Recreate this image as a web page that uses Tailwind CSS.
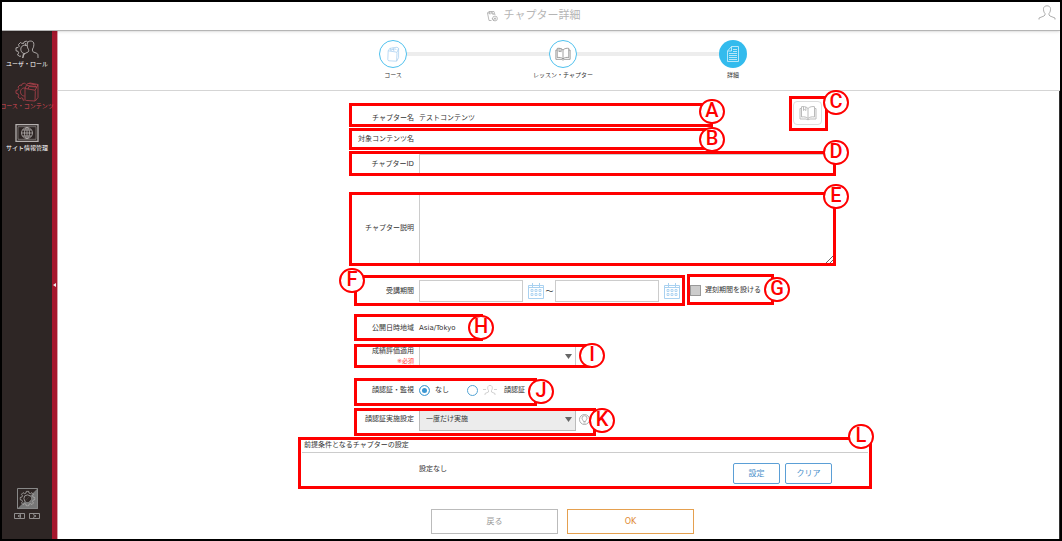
<!DOCTYPE html>
<html lang="ja">
<head>
<meta charset="utf-8">
<meta name="viewport" content="width=device-width, initial-scale=1">
<title>チャプター詳細</title>
<script src="https://cdn.jsdelivr.net/npm/@tailwindcss/browser@4"></script>
</head>
<body class="flex min-h-screen flex-col border-2 border-black bg-white font-['DejaVu_Sans','Noto_Sans_CJK_JP',sans-serif] text-[7px] leading-[9px] text-[#333]">

<svg class="hidden" aria-hidden="true">
  <symbol id="gear" viewBox="0 0 20 20" fill="none" stroke="currentColor">
    <path d="M8.6 1h2.8l.5 2.2 1.700.7 2-1.200 1.900 2-1.200 1.900.8 1.700 2.200.5v2.600l-2.200.6-.8 1.700 1.200 1.900-1.900 2-2-1.200-1.700.7-.5 2.200H8.600l-.5-2.200-1.700-.7-2 1.200-1.900-2 1.200-1.900-.8-1.700L.7 11.400V8.800l2.200-.5.8-1.700-1.200-1.900 1.900-2 2 1.200 1.700-.7z"/>
    <circle cx="10" cy="10" r="4.500"/>
  </symbol>
  <symbol id="person" viewBox="0 0 18 16" fill="none" stroke="currentColor">
    <path d="M1 14.500v-1.500l5-2 1-1V8.500C5.500 7 5.500 5 5.500 3.500 5.800 1.700 7.200.8 9 .8s3.200.9 3.500 2.700c0 1.500 0 3.500-1.500 5V10l1 1 5 2v1.500"/>
  </symbol>
  <symbol id="calendar" viewBox="0 0 16 16" fill="none" stroke="currentColor">
    <path d="M.5 2.500h15v13H.5zM.5 4.500h15M4.500 0v4M11.500 0v4"/>
    <path d="M3 6.500h2v2H3zM7 6.500h2v2H7zM11 6.500h2v2h-2zM3 10.500h2v2H3zM7 10.500h2v2H7zM11 10.500h2v2h-2z" stroke-width=".9"/>
  </symbol>
  <symbol id="book" viewBox="0 0 18 15" fill="none" stroke="currentColor">
    <path d="M9 3C7 1 4.500.8 2.500 1.200v10.300C5 11 7.500 11.500 9 13c1.500-1.500 4-2 6.500-1.500V1.200C13.500.8 11 1 9 3zM9 3v10M2.500 3H1v10.500h6l2 .8 2-.8h6V3h-1.500"/>
    <path d="M4.500 1v4l1.200-1 1.200 1V1.400"/>
  </symbol>
  <symbol id="binder" viewBox="0 0 16 20" fill="none" stroke="currentColor">
    <path d="M2 6l9.500 1.500c1 .2 1.500.5 1.500 1.500l-.5 10L3 18.500c-1-.2-1.500-.6-1.500-1.500zM2 6l2-3 9-1.500L15 3v11.500l-2.300 4.300M13 8l2-5M5 5l6-1.500 1 1.500M4.500 2.700l1.200 3.700M8 2l1.200 4.500"/>
  </symbol>
</svg>

<header class="relative flex h-[29px] items-center justify-center border-b border-[#b5b5b5] pl-1 shadow-sm">
  <svg class="mr-1.5 h-3 w-3 text-[#aaa]" viewBox="0 0 12 12" fill="none" stroke="currentColor" stroke-width=".8"><path d="M5.500 10.500H3L1.500 3l1.500-1.500h5L9 5M1.500 3H7l1 2M3 1.500l1 3M5.500 1.500l1 3"/><circle cx="9" cy="8.500" r="2.400"/><path d="M6 8l2 3M8.500 8h1.200v1.200H8.500z"/></svg>
  <h1 class="text-[11px] leading-4 text-[#b5b5b5]">チャプター詳細</h1>
  <button class="absolute right-1 top-[3px] text-[#999]" aria-label="ユーザー"><svg class="h-4 w-[18px]" stroke-width=".8"><use href="#person"/></svg></button>
</header>

<div class="flex flex-1">
  <aside class="flex w-[56px] shrink-0 border-r border-[#d9a0a8] bg-[#a5172d]">
    <nav class="flex w-[50px] flex-col items-center bg-[#2e2625] pb-5 text-[6px] leading-2 text-white">
      <a href="#" class="mt-[9px] flex flex-col items-center whitespace-nowrap">
        <svg class="h-5 w-6" viewBox="0 0 24 20" fill="none" stroke="#c9c5c4" stroke-width=".8"><path d="M13 2.500L11.500 1 9 2 8.500 3.500 6.500 3.200 5.500 2.500 3.500 4.500l.7 1.800L3 7.500l-2 .3v3l2 .5.7 1.500L2.500 15 5 16.500l1-.7M12 5.500C8 4 5 7 6 10.500c.5 2 2 3 3.500 3L7.500 18M11 3c-1 1-.5 2-.5 3"/><path d="M8 18v-3.500l5-2.500c1-.5.8-1.500.5-2.500-1.500-2-1.500-5-1-7C13.500.5 18 .5 18.700 3c.4 2 0 4.500-1.200 6 0 1.500-.2 2.500 1 3l3 1.200c1.200.5 1.500 1 1.500 2.800v2"/></svg>
        ユーザ・ロール
      </a>
      <a href="#" class="mt-3.5 flex flex-col items-center whitespace-nowrap text-[#dc4a58]">
        <svg class="h-5 w-6" viewBox="0 0 24 20" fill="none" stroke="#b3414c" stroke-width=".8"><path d="M11 2.500L9.500 1 7 2 6.500 3.500 5 3 3 5l.8 1.500L3 8 1 8.300v3l2 .5.7 1.500L3 15l2 1.700 1.500-.9 1.500.7v1.700h1.500M10 6C6.500 5.500 4.500 9 6 12c.8 1.400 2 2 3.500 2"/><path d="M10 6.500L19 8c1 .2 1.300.5 1.300 1.500L20 19l-8.500-.5c-1-.1-1.500-.5-1.500-1.500zM10 6.500L12 2l3-1 8 1.500v13L20.300 19M20 8.500l3-6M13 7l1-2.500 8 .5M12 3.500l9 1M14 1.500l7 1.500"/></svg>
        コース・コンテンツ
      </a>
      <a href="#" class="mt-3.5 flex flex-col items-center whitespace-nowrap">
        <svg class="h-5 w-6" viewBox="0 0 24 20" fill="none" stroke="#b5b0af" stroke-width=".8"><path d="M1 .7h22v16.600H1z" stroke-width="1.300"/><path d="M3 2.700h18v12.600H3z" stroke-width=".5"/><circle cx="12" cy="9" r="5.500"/><ellipse cx="12" cy="9" rx="2.500" ry="5.500"/><path d="M6.500 9h11M7.500 6h9M7.500 12h9M12 3.500v11"/></svg>
        サイト情報管理
      </a>
      <button class="mt-auto h-[21px] w-[21px]" aria-label="設定メニュー"><svg class="h-full w-full" viewBox="0 0 21 21"><path d="M21 0v21H0z" fill="#777"/><path d="M.5.500h20v20H.5z" fill="none" stroke="#888"/><g class="text-[#b0adac]"><use href="#gear" x="2.500" y="2.500" width="16" height="16"/></g><path d="M8 13L13 8a3.500 3.500 0 0 1-5 5z" fill="#2e2625"/></svg></button>
      <div class="mt-1 flex gap-1">
        <button aria-label="前へ"><svg class="h-1.5 w-[11px]" viewBox="0 0 11 6" fill="none" stroke="#aaa" stroke-width=".8"><path d="M.5.500h10v5H.5zM6.500 1.500L4 3l2.500 1.500z"/></svg></button>
        <button aria-label="次へ"><svg class="h-1.5 w-[11px]" viewBox="0 0 11 6" fill="none" stroke="#aaa" stroke-width=".8"><path d="M.5.500h10v5H.5zM4 1.500L7 3 4 4.500"/></svg></button>
      </div>
    </nav>
    <button class="flex flex-1 items-center justify-center" aria-label="メニューを閉じる"><svg class="h-1 w-[3px]" viewBox="0 0 3 4"><path d="M3 0v4L0 2z" fill="#eee"/></svg></button>
  </aside>

  <main class="flex min-w-0 flex-1 flex-col">
    <ol class="flex h-[60px] justify-center border-b border-[#d5d5d5] pl-2 pt-[9px] text-[6px] leading-3">
      <li class="relative flex w-[170px] flex-col items-center gap-px">
        <span class="absolute left-1/2 top-3 h-1 w-full bg-[#ededed]"></span>
        <span class="relative flex h-7 w-7 items-center justify-center rounded-full border border-[#4fc1ee] bg-white text-[#a5cdf0]"><svg class="h-4 w-3.5" stroke-width=".9"><use href="#binder"/></svg></span>コース
      </li>
      <li class="relative flex w-[170px] flex-col items-center gap-px">
        <span class="absolute left-1/2 top-3 h-1 w-full bg-[#ededed]"></span>
        <span class="relative flex h-7 w-7 items-center justify-center rounded-full border border-[#4fc1ee] bg-white text-[#888]"><svg class="h-3.5 w-4" stroke-width=".9"><use href="#book"/></svg></span>レッスン・チャプター
      </li>
      <li class="relative flex w-[170px] flex-col items-center gap-px">
        <span class="relative flex h-7 w-7 items-center justify-center rounded-full bg-[#33bbed]"><svg class="h-4 w-3" viewBox="0 0 12 16" fill="none" stroke="#c4ecfb" stroke-width=".9"><path d="M4.500.5h7v15H.5V5zM4.500.5V5h-4M6 3.500h4M6 5.500h4M2 7.500h8M2 9.500h8M2 11.500h8M2 13.500h8"/></svg></span>詳細
      </li>
    </ol>

    <form class="flex-1 border-r border-[#333] pb-[5px] pl-2 pt-3">
      <div class="mx-auto w-full max-w-[619px] pl-[45px]">

        <div class="relative flex h-[25px] items-center gap-[5px] pt-[5px]">
          <span class="w-[116px] text-right">チャプター名</span><span>テストコンテンツ</span>
          <div class="pointer-events-none absolute left-[51px] top-0 h-6 w-[364px] border-3 border-[#f00]"></div>
          <span class="absolute -top-1 left-[401px] flex h-[25px] w-[26px] items-center justify-center rounded-full border-2 border-[#f00] bg-white pb-0.5 font-['Roboto',sans-serif] text-[20px] font-medium text-[#f00]">A</span>
          <div class="relative -mt-[7px] ml-auto mr-[50px] h-6 self-start">
            <button type="button" class="flex h-6 w-[29px] items-center justify-center rounded-sm border border-[#ddd] text-[#bbb]" aria-label="コンテンツを開く"><svg class="h-4 w-[18px]"><use href="#book"/></svg></button>
            <div class="pointer-events-none absolute -left-1 -top-[5px] h-[35px] w-[39px] border-3 border-[#f00]"></div>
            <span class="absolute -top-[11px] left-[30px] flex h-[25px] w-[26px] items-center justify-center rounded-full border-2 border-[#f00] bg-white pb-0.5 font-['Roboto',sans-serif] text-[20px] font-medium text-[#f00]">C</span>
          </div>
        </div>

        <div class="relative flex h-[23px] items-center">
          <span class="w-[116px] text-right">対象コンテンツ名</span>
          <div class="pointer-events-none absolute left-[51px] top-0 h-[22px] w-[364px] border-3 border-[#f00]"></div>
          <span class="absolute -top-px left-[401px] flex h-[25px] w-[26px] items-center justify-center rounded-full border-2 border-[#f00] bg-white pb-0.5 font-['Roboto',sans-serif] text-[20px] font-medium text-[#f00]">B</span>
        </div>

        <div class="relative flex h-[25px] items-center gap-[5px]">
          <label for="chapter-id" class="w-[116px] pt-0.5 text-right">チャプターID</label>
          <input id="chapter-id" type="text" class="h-5 w-[416px] border border-[#ccc] px-1">
          <div class="pointer-events-none absolute left-[51px] top-0 h-[25px] w-[487px] border-3 border-[#f00]"></div>
          <span class="absolute -top-[11px] left-[525px] flex h-[25px] w-[26px] items-center justify-center rounded-full border-2 border-[#f00] bg-white pb-0.5 font-['Roboto',sans-serif] text-[20px] font-medium text-[#f00]">D</span>
        </div>

        <div class="relative mt-4 flex h-[74px] items-center gap-[5px]">
          <label for="chapter-desc" class="w-[116px] pb-0.5 text-right">チャプター説明</label>
          <textarea id="chapter-desc" class="-mt-px h-[73px] w-[416px] border border-[#ccc] p-1"></textarea>
          <div class="pointer-events-none absolute left-[51px] top-0 h-[74px] w-[487px] border-3 border-[#f00]"></div>
          <span class="absolute -top-2 left-[525px] flex h-[25px] w-[26px] items-center justify-center rounded-full border-2 border-[#f00] bg-white pb-0.5 font-['Roboto',sans-serif] text-[20px] font-medium text-[#f00]">E</span>
        </div>

        <div class="relative mt-[9px] flex h-[31px] items-center">
          <label for="date-from" class="mr-[5px] w-[116px] pt-0.5 text-right">受講期間</label>
          <input id="date-from" type="text" class="h-[22px] w-[104px] border border-[#ccc] px-1">
          <button type="button" class="ml-[5px] text-[#a9d1f0]" aria-label="開始日を選択"><svg class="h-4 w-4"><use href="#calendar"/></svg></button>
          <span class="w-[11px] pt-0.5 text-center text-[8px]">～</span>
          <input id="date-to" type="text" aria-label="受講期間の終了日" class="h-[22px] w-[104px] border border-[#ccc] px-1">
          <button type="button" class="ml-[5px] text-[#a9d1f0]" aria-label="終了日を選択"><svg class="h-4 w-4"><use href="#calendar"/></svg></button>
          <label class="ml-2.5 flex items-center gap-1 whitespace-nowrap"><input type="checkbox" class="h-[11px] w-[11px] appearance-none border border-[#999] bg-[#ccc] checked:bg-[#4a9fd8]">遅刻期間を設ける</label>
          <div class="pointer-events-none absolute left-[56px] top-0 h-[31px] w-[331px] border-3 border-[#f00]"></div>
          <div class="pointer-events-none absolute -top-px left-[389px] h-[31px] w-[87px] border-3 border-[#f00]"></div>
          <span class="absolute -top-[7px] left-[41px] flex h-[25px] w-[26px] items-center justify-center rounded-full border-2 border-[#f00] bg-white pb-0.5 font-['Roboto',sans-serif] text-[20px] font-medium text-[#f00]">F</span>
          <span class="absolute left-[466px] top-0.5 flex h-[25px] w-[26px] items-center justify-center rounded-full border-2 border-[#f00] bg-white pb-0.5 font-['Roboto',sans-serif] text-[20px] font-medium text-[#f00]">G</span>
        </div>

        <div class="relative mt-2 flex h-[27px] items-center gap-[5px] pt-0.5">
          <span class="w-[116px] text-right">公開日時地域</span><span>Asia/Tokyo</span>
          <div class="pointer-events-none absolute left-[56px] top-0 h-[27px] w-[129px] border-3 border-[#f00]"></div>
          <span class="absolute left-[170px] top-px flex h-[25px] w-[26px] items-center justify-center rounded-full border-2 border-[#f00] bg-white pb-0.5 font-['Roboto',sans-serif] text-[20px] font-medium text-[#f00]">H</span>
        </div>

        <div class="relative mt-[3px] flex h-6 items-center gap-[5px]">
          <label for="grading" class="w-[116px] text-right">成績評価適用<span class="block text-[6px] text-[#f33]">※必須</span></label>
          <div class="relative">
            <select id="grading" class="block h-[22px] w-[157px] appearance-none border border-[#ccc] bg-white px-1.5"><option></option></select>
            <svg class="pointer-events-none absolute right-1 top-[9px] h-[5px] w-[7px]" viewBox="0 0 7 5"><path d="M0 0h7L3.500 5z" fill="#666"/></svg>
          </div>
          <div class="pointer-events-none absolute left-[56px] top-0 h-6 w-[236px] border-3 border-[#f00]"></div>
          <span class="absolute -top-px left-[281px] flex h-[25px] w-[26px] items-center justify-center rounded-full border-2 border-[#f00] bg-white pb-0.5 font-['Roboto',sans-serif] text-[20px] font-medium text-[#f00]">I</span>
        </div>

        <div role="radiogroup" aria-labelledby="face-label" class="relative mt-2.5 flex h-7 items-center pb-1">
          <span id="face-label" class="mr-[5px] w-[116px] text-right">顔認証・監視</span>
          <label class="flex w-12 items-center gap-[5px]"><input type="radio" name="face" checked class="h-[11px] w-[11px] appearance-none rounded-full border border-[#55a5d5] checked:bg-[#3b97d3] checked:shadow-[inset_0_0_0_2px_#fff]">なし</label>
          <label class="flex items-center gap-[5px]"><input type="radio" name="face" class="h-[11px] w-[11px] appearance-none rounded-full border border-[#55a5d5] checked:bg-[#3b97d3] checked:shadow-[inset_0_0_0_2px_#fff]">
            <svg class="mr-0.5 h-3 w-3.5" viewBox="0 0 14 12" fill="none" stroke="#c5c5c5" stroke-width=".8"><path d="M0 5.500h3M11 5.500h3M2 11V9.500L5.500 8V6.500C4.500 5 4.500 3.500 5 2.500c.7-1.500 3.300-1.500 4 0 .5 1 .5 2.500-.5 4V8L12 9.500V11"/></svg>顔認証</label>
          <div class="pointer-events-none absolute left-[56px] top-0 h-7 w-[183px] border-3 border-[#f00]"></div>
          <span class="absolute left-[230px] top-px flex h-[25px] w-[26px] items-center justify-center rounded-full border-2 border-[#f00] bg-white pb-0.5 font-['Roboto',sans-serif] text-[20px] font-medium text-[#f00]">J</span>
        </div>

        <div class="relative mt-0.5 flex h-7 items-center gap-[5px] pb-[6px]">
          <label for="face-mode" class="w-[116px] text-right">顔認証実施設定</label>
          <div class="relative">
            <select id="face-mode" class="block h-[23px] w-[157px] appearance-none border border-[#bbb] bg-[#ececec] px-1.5"><option>一度だけ実施</option></select>
            <svg class="pointer-events-none absolute right-1 top-[9px] h-[5px] w-[7px]" viewBox="0 0 7 5"><path d="M0 0h7L3.500 5z" fill="#666"/></svg>
          </div>
          <svg class="-ml-0.5 h-[11px] w-[11px]" viewBox="0 0 11 11" fill="none" stroke="#999" stroke-width=".8"><circle cx="5.500" cy="5.500" r="5"/><path d="M4.500 7.500C4 6 3 5.500 3 4.200a2.500 2.500 0 0 1 5 0C8 5.500 7 6 6.500 7.500zM4.500 9h2"/></svg>
          <div class="pointer-events-none absolute left-[56px] top-0 h-7 w-[242px] border-3 border-[#f00]"></div>
          <span class="absolute left-[291px] top-0 flex h-[25px] w-[26px] items-center justify-center rounded-full border-2 border-[#f00] bg-white pb-0.5 font-['Roboto',sans-serif] text-[20px] font-medium text-[#f00]">K</span>
        </div>

        <section class="relative mt-px h-[52px] px-1">
          <h2 class="flex h-4 items-end border-b border-[#ccc] pb-0.5 pl-0.5">前提条件となるチャプターの設定</h2>
          <div class="flex items-start gap-[5px] pl-[117px] pr-9 pt-2.5">
            <p class="mr-auto pt-0.5">設定なし</p>
            <button type="button" class="h-[21px] w-[47px] rounded-xs border border-[#5b9fd6] text-[8px] text-[#4a8fca]">設定</button>
            <button type="button" class="h-[21px] w-[47px] rounded-xs border border-[#5b9fd6] text-[8px] text-[#4a8fca]">クリア</button>
          </div>
          <div class="pointer-events-none absolute inset-0 border-3 border-[#f00]"></div>
          <span class="absolute -top-[13px] left-[550px] flex h-[25px] w-[26px] items-center justify-center rounded-full border-2 border-[#f00] bg-white pb-0.5 font-['Roboto',sans-serif] text-[20px] font-medium text-[#f00]">L</span>
        </section>
      </div>

      <div class="mt-5 flex justify-center gap-[9px] text-[8px]">
        <button type="button" class="h-[25px] w-[127px] border border-[#bbb] text-[#999]">戻る</button>
        <button type="submit" class="h-[25px] w-[127px] border border-[#e5a04f] text-[#e08a35]">OK</button>
      </div>
    </form>
  </main>
</div>
</body>
</html>
